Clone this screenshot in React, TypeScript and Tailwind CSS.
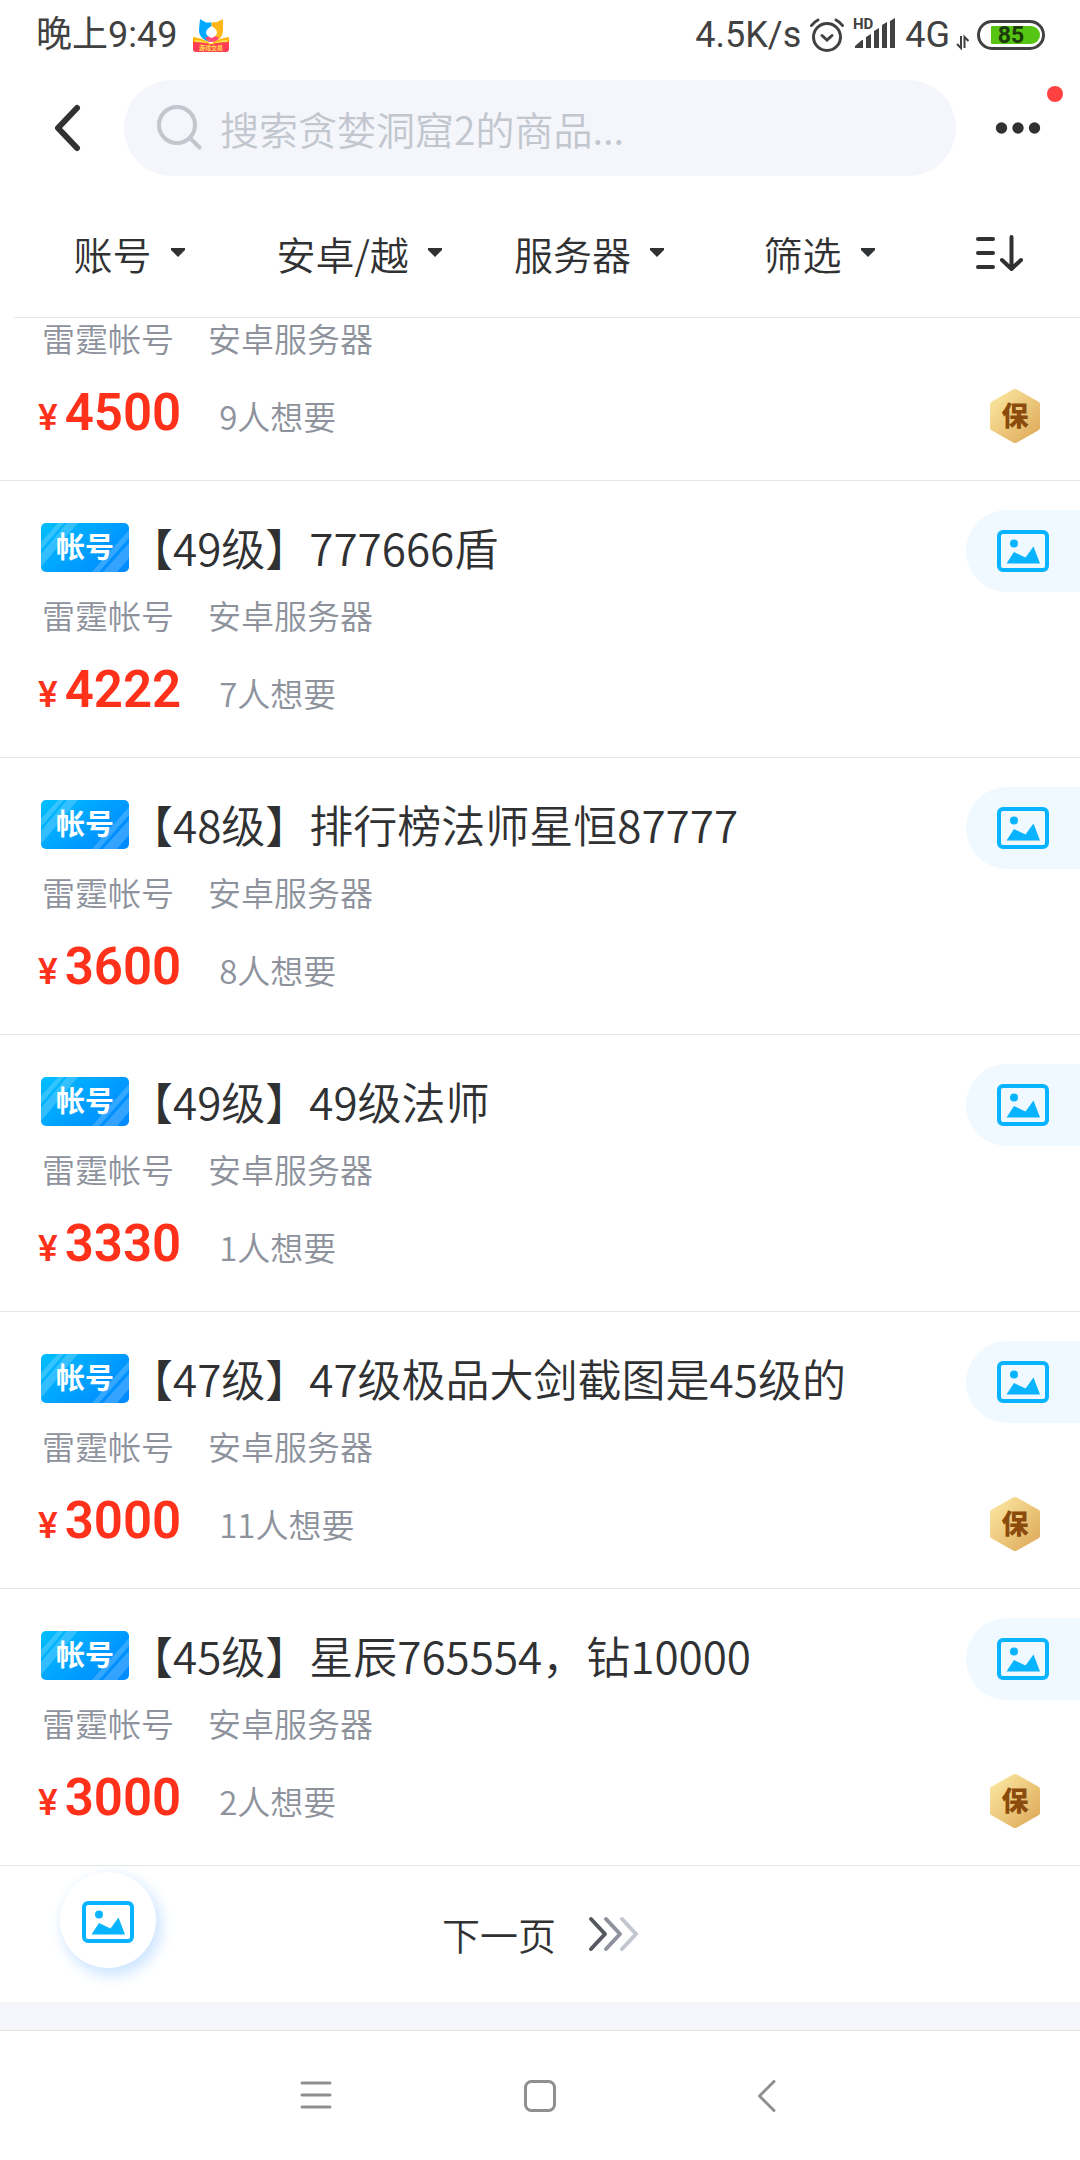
import { useState, ChangeEvent } from "react";

type Item = {
  id: number;
  title?: string;
  price: string;
  wants: string;
  photo?: boolean;
  insured?: boolean;
};

const items: Item[] = [
  { id: 1, price: "4500", wants: "9人想要", insured: true },
  { id: 2, title: "【49级】777666盾", price: "4222", wants: "7人想要", photo: true },
  { id: 3, title: "【48级】排行榜法师星恒87777", price: "3600", wants: "8人想要", photo: true },
  { id: 4, title: "【49级】49级法师", price: "3330", wants: "1人想要", photo: true },
  { id: 5, title: "【47级】47级极品大剑截图是45级的", price: "3000", wants: "11人想要", photo: true, insured: true },
  { id: 6, title: "【45级】星辰765554，钻10000", price: "3000", wants: "2人想要", photo: true, insured: true },
];

const filters = ["账号", "安卓/越", "服务器", "筛选"];

function PhotoIcon() {
  return (
    <svg width="52" height="42" viewBox="0 0 52 42" fill="none">
      <rect x="2" y="2" width="48" height="38" rx="4" stroke="#08b4ff" strokeWidth="4" />
      <circle cx="17" cy="13.5" r="4" fill="#08b4ff" />
      <path d="M9.5 33.5 17 22l11.500 5.500L36.500 16.500 43 33.500Z" fill="#08b4ff" />
    </svg>
  );
}

function AppLogo() {
  return (
    <svg width="36" height="33" viewBox="0 0 36 33" className="overflow-visible">
      <path d="M0 18c7 1 13 3 18 7 5-4 11-6 18-7v12H0Z" fill="#ffb400" />
      <path d="M2 21c6 0 12 2 16 5 4-3 10-5 16-5v3H2Z" fill="#ffe24a" />
      <path d="M7 0l6 3.500h5.500V23C11 22 6 18 6 11Z" fill="#00a8ff" />
      <path d="M18.500 3.500 24 3l6-3v11c0 7-4 11-11.500 12Z" fill="#ffb818" />
      <path d="M12 19c2-2 10-3 14 0-2 3-5 4-7.500 4-2 0-4.500-1-6.500-4Z" fill="#ff4a7a" />
      <path d="M18.500 7c3 2 5.500 4 5.500 6.500S21.500 18 18.500 19C15.500 18 13 16 13 13.500S15.500 9 18.500 7Z" fill="#fff" />
      <path d="M0 23c8 0 14 1 18 2.500C22 24 28 23 36 23v7a3 3 0 0 1-3 3H3a3 3 0 0 1-3-3Z" fill="#ff3d55" />
      <text x="18" y="31" textAnchor="middle" fontSize="6" fontWeight="700" fill="#ffe14a">
        游戏交易
      </text>
    </svg>
  );
}

function StatusBar() {
  return (
    <div className="flex h-[70px] items-center justify-between pr-[35px] pl-9 font-[Roboto,'Noto_Sans_CJK_SC',sans-serif] font-normal text-[#414141]">
      <div className="flex items-center gap-4">
        <span className="text-[36px] leading-10">晚上9:49</span>
        <AppLogo />
      </div>
      <div className="flex items-center gap-2">
        <span className="text-[36px] leading-10">4.5K/s</span>
        <svg width="36" height="36" viewBox="0 0 36 36" fill="none" stroke="#414141" strokeWidth="3" strokeLinecap="round">
          <circle cx="18" cy="20" r="13.500" />
          <path d="M13 18.500l5 4.500 5-4.500" />
          <path d="M2.500 8.500Q5 5 9 3M33.500 8.500Q31 5 27 3" />
        </svg>
        <svg width="44" height="36" viewBox="0 0 44 36" fill="#414141" className="overflow-visible">
          <text x="0" y="12" fontSize="15" fontWeight="700">
            HD
          </text>
          <path d="M2 31v-2l7-6h1v8ZM13 31V20l5-3v14ZM21 31V14l5-3v20ZM29 31V8l5-3v26ZM37 31V4l5-3v30Z" />
        </svg>
        <div className="flex items-center gap-1.5">
          <span className="text-[36px] leading-10">4G</span>
          <svg width="13" height="36" viewBox="0 0 13 36" fill="none" stroke="#414141" strokeWidth="2">
            <path d="M5 19v12L1 27M8.500 31V20l4 4" />
          </svg>
        </div>
        <svg width="68" height="32" viewBox="0 0 68 32" className="overflow-visible">
          <rect x="1.500" y="2.500" width="65" height="27" rx="13.500" fill="#fff" stroke="#414141" strokeWidth="3" />
          <path d="M15 7h39a9 9 0 0 1 0 18H15a1 1 0 0 1-1-1V8a1 1 0 0 1 1-1Z" fill="#56c412" />
          <text x="34" y="24" textAnchor="middle" fontSize="23" fontWeight="700" fill="#1c3a0c">
            85
          </text>
        </svg>
      </div>
    </div>
  );
}

function SearchBar() {
  const [keyword, setKeyword] = useState("");

  return (
    <div className="relative mt-[10px] flex h-24 items-center">
      <button type="button" aria-label="返回" className="flex h-full w-[124px] items-center justify-center pl-3">
        <svg width="28" height="48" viewBox="0 0 28 48" fill="none" stroke="#303133" strokeWidth="6" strokeLinecap="round" strokeLinejoin="round">
          <path d="M23 4 4 24l19 20" />
        </svg>
      </button>
      <label className="flex h-full flex-1 items-center gap-4 rounded-full bg-[#f5f6fb] pl-8">
        <svg width="48" height="48" viewBox="0 0 48 48" fill="none" stroke="#c1c6cf" strokeWidth="4" strokeLinecap="round">
          <circle cx="21" cy="21" r="18" />
          <path d="m33.500 33.500 10 10" />
        </svg>
        <input
          type="text"
          value={keyword}
          onChange={(e: ChangeEvent<HTMLInputElement>) => setKeyword(e.target.value)}
          placeholder="搜索贪婪洞窟2的商品..."
          aria-label="搜索"
          className="min-w-0 flex-1 bg-transparent text-[39px] leading-14 outline-none placeholder:text-[#c1c6cf]"
        />
      </label>
      <button type="button" aria-label="更多" className="flex h-full w-[124px] items-center justify-center">
        <svg width="46" height="12" viewBox="0 0 46 12" fill="#303133">
          <circle cx="6.500" cy="6" r="5.700" />
          <circle cx="23" cy="6" r="5.700" />
          <circle cx="39.500" cy="6" r="5.700" />
        </svg>
        <span className="absolute top-1.5 right-[17px] size-4 rounded-full bg-[#ff4141]" />
      </button>
    </div>
  );
}

function FilterBar() {
  return (
    <div className="mt-4 ml-[14px] flex h-[126px] border-b border-[#e6e6e6] pb-1 text-[39px] text-[#303133]">
      {filters.map((name) => (
        <label key={name} className="flex flex-1 items-center justify-center gap-[18px]">
          <select aria-label={name} className="appearance-none bg-transparent leading-14">
            <option>{name}</option>
          </select>
          <svg width="14" height="9" viewBox="0 0 14 9" fill="#303133">
            <path d="M0 0h14v2L7 9 0 2Z" />
          </svg>
        </label>
      ))}
      <button type="button" aria-label="排序" className="flex w-[146px] items-center justify-center pr-[14px]">
        <svg width="50" height="42" viewBox="0 0 50 42" fill="none" stroke="#303133" strokeWidth="4" strokeLinecap="round" strokeLinejoin="round">
          <path d="M3 7h15M3 21h15M3 35h15M36.500 5v32M27 28l9.500 9L46 28" />
        </svg>
      </button>
    </div>
  );
}

function AccountBadge() {
  return (
    <svg width="88" height="49" viewBox="0 0 88 49" className="shrink-0">
      <defs>
        <linearGradient id="badge" x1="0" y1="0" x2="1" y2="0.600">
          <stop offset="0" stopColor="#00bfff" />
          <stop offset="1" stopColor="#008cff" />
        </linearGradient>
        <clipPath id="badgeClip">
          <rect width="88" height="49" rx="5" />
        </clipPath>
      </defs>
      <g clipPath="url(#badgeClip)">
        <rect width="88" height="49" fill="url(#badge)" />
        <path d="M17 0h6L0 27v-8ZM26 0h11L0 44V31ZM51 49h7l30-34V7ZM62 49h14l12-14V20Z" fill="#fff" opacity="0.200" />
      </g>
      <text x="44" y="35" textAnchor="middle" fontSize="29" fontWeight="700" fill="#fff">
        帐号
      </text>
    </svg>
  );
}

function InsuredBadge() {
  return (
    <svg width="50" height="56" viewBox="0 0 50 56" className="ml-auto shrink-0">
      <defs>
        <linearGradient id="gold" x1="0" y1="0" x2="1" y2="1">
          <stop offset="0" stopColor="#fdeba6" />
          <stop offset="1" stopColor="#dca654" />
        </linearGradient>
      </defs>
      <path d="M23 1.500q2-1 4 0L49 14q1 1 1 2v24q0 1-1 2L27 54.500q-2 1-4 0L1 42q-1-1-1-2V16q0-1 1-2Z" fill="url(#gold)" />
      <text x="25" y="38" textAnchor="middle" fontSize="27" fontWeight="900" fill="#8a4b0c">
        保
      </text>
    </svg>
  );
}

function ItemRow({ item }: { item: Item }) {
  return (
    <li className="border-b border-[#e6e6e6] pr-10 pb-9 pl-[38px]">
      {item.title && (
        <div className="flex h-[114px] items-start pt-[29px] pl-[3px]">
          <div className="flex flex-1 items-center pt-3">
            <AccountBadge />
            <h2 className="text-[44px] leading-[50px] whitespace-nowrap text-[#303133]">{item.title}</h2>
          </div>
          {item.photo && (
            <button
              type="button"
              aria-label="查看图片"
              className="-mr-10 flex h-[82px] w-[114px] items-center rounded-l-full bg-[#f0f9ff] pl-[31px]"
            >
              <PhotoIcon />
            </button>
          )}
        </div>
      )}
      <div className="flex gap-[34px] pl-1 text-[33px] leading-10 text-[#8d929c]">
        <span>雷霆帐号</span>
        <span>安卓服务器</span>
      </div>
      <div className="mt-[30px] flex h-14 items-start">
        <div className="flex items-center gap-[38px] leading-[50px]">
          <span className="flex items-baseline gap-[7px] font-[Roboto,sans-serif] text-[#ff311a]">
            <span className="text-[37px] font-medium">¥</span>
            <span className="text-[51px] font-semibold">{item.price}</span>
          </span>
          <span className="text-[33px] text-[#8d929c]">{item.wants}</span>
        </div>
        {item.insured && <InsuredBadge />}
      </div>
    </li>
  );
}

function Pager() {
  return (
    <div className="relative flex h-[136px] items-center justify-center">
      <button
        type="button"
        aria-label="只看有图"
        className="absolute top-1.5 left-[60px] flex size-24 items-center justify-center rounded-full bg-white pt-1 shadow-[4px_6px_14px_2px_#cfe6ff]"
      >
        <PhotoIcon />
      </button>
      <a href="#next" className="flex items-center gap-8 text-[38px] leading-14 text-[#303133]">
        下一页
        <svg width="50" height="36" viewBox="0 0 50 36" fill="none" strokeWidth="4" strokeLinecap="round" strokeLinejoin="round">
          <path d="M34 3l14 15-14 15" stroke="#c1c6cf" />
          <path d="M18 3l14 15-14 15" stroke="#8d929c" />
          <path d="M3 3l14 15L3 33" stroke="#55585e" />
        </svg>
      </a>
    </div>
  );
}

function SystemNav() {
  return (
    <nav className="flex h-[130px] items-center justify-center border-t border-[#e0e0e0] bg-white">
      <button type="button" aria-label="菜单" className="flex h-full w-56 items-center justify-center">
        <svg width="32" height="32" viewBox="0 0 32 32" stroke="#8f8f8f" strokeWidth="3" strokeLinecap="round">
          <path d="M2 3h28M2 15h28M2 27h28" />
        </svg>
      </button>
      <button type="button" aria-label="主页" className="flex h-full w-56 items-center justify-center">
        <svg width="32" height="32" viewBox="0 0 32 32" fill="none" stroke="#8f8f8f" strokeWidth="3">
          <rect x="1.500" y="1.500" width="29" height="29" rx="6" />
        </svg>
      </button>
      <button type="button" aria-label="返回上级" className="flex h-full w-56 items-center justify-center">
        <svg width="24" height="32" viewBox="0 0 24 32" fill="none" stroke="#8f8f8f" strokeWidth="3" strokeLinecap="round" strokeLinejoin="round">
          <path d="M22 1.500 7.500 16 22 30.500" />
        </svg>
      </button>
    </nav>
  );
}

export default function App() {
  return (
    <div className="flex min-h-screen flex-col bg-white font-['Noto_Sans_CJK_SC',sans-serif] font-[350]">
      <header>
        <StatusBar />
        <SearchBar />
        <FilterBar />
      </header>
      <main className="flex-1">
        <ul>
          {items.map((item) => (
            <ItemRow key={item.id} item={item} />
          ))}
        </ul>
        <Pager />
      </main>
      <div className="h-7 bg-[#f5f6fb]" />
      <SystemNav />
    </div>
  );
}
